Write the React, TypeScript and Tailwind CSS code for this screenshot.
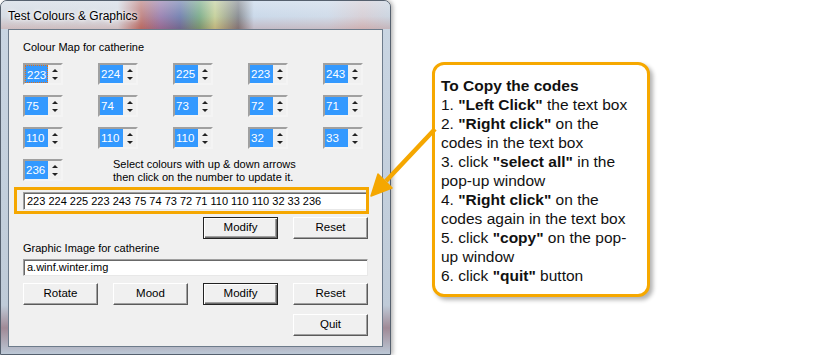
import React from "react";

const row1 = ["223", "224", "225", "223", "243"];
const row2 = ["75", "74", "73", "72", "71"];
const row3 = ["110", "110", "110", "32", "33"];

function Spinner({ value, focused }: { value: string; focused?: boolean }) {
  return (
    <div className="w-[40px] h-[22px] flex border-2 border-t-[#a0a0a0] border-l-[#a0a0a0] border-r-[#f4f4f4] border-b-[#f4f4f4] bg-[#f0f0f0]">
      <div
        className={
          "w-[23px] shrink-0 h-full bg-[#3399ff] text-white text-[11.5px] leading-[18px] pl-[1px] overflow-hidden whitespace-nowrap " +
          (focused ? "border border-dotted border-[#e0701a] leading-[16px] pl-0" : "")
        }
      >
        {value}
      </div>
      <div className="w-[13px] shrink-0 flex flex-col items-center justify-center gap-[5px]">
        <svg width="6" height="3" viewBox="0 0 6 3">
          <path d="M3 0 L6 3 L0 3 Z" fill="#222" />
        </svg>
        <svg width="6" height="3" viewBox="0 0 6 3">
          <path d="M0 0 L6 0 L3 3 Z" fill="#222" />
        </svg>
      </div>
    </div>
  );
}

function Btn({ label, def, className }: { label: string; def?: boolean; className?: string }) {
  return (
    <button
      className={
        "h-[22px] w-[75px] bg-[#f0f0f0] text-[11.5px] text-black leading-none " +
        (def
          ? "border border-[#222] shadow-[inset_1px_1px_0_#fff,inset_-1px_-1px_0_#696969,inset_-2px_-2px_0_#a0a0a0] "
          : "border border-white border-r-[#5a5a5a] border-b-[#5a5a5a] shadow-[inset_-1px_-1px_0_#a0a0a0] ") +
        (className ?? "")
      }
    >
      {label}
    </button>
  );
}

function TextBox({ value, h }: { value: string; h: string }) {
  return (
    <div
      className={
        "w-[345px] bg-white border border-[#a0a0a0] border-r-[#e8e8e8] border-b-[#e8e8e8] shadow-[inset_1px_1px_0_#696969] pl-[3px] text-[11px] text-black flex items-center " +
        h
      }
    >
      {value}
    </div>
  );
}

function Window() {
  return (
    <div className="w-[391px] h-[355px] shrink-0 flex flex-col rounded-t-[7px] border border-[#55606e] bg-[#c9d5e2] shadow-[2px_0_4px_rgba(0,0,0,0.3)]">
      <div className="relative h-[28px] rounded-t-[6px] bg-[linear-gradient(to_right,#d4dae2_0%,#d8dde4_30%,#b7615a_36%,#84609c_41%,#4f5f9c_46%,#5c9b6a_51%,#c0cc80_55%,#6a6d72_61%,#c4d6ea_65%,#ccdaea_84%,#d6c9cf_93%,#c6d1de_100%)]">
        <div className="absolute inset-0 rounded-t-[6px] bg-[linear-gradient(to_bottom,rgba(235,240,246,0.5),rgba(220,226,234,0.3)_55%,rgba(190,120,110,0.3))]" />
        <div className="relative pl-[7px] pt-[6px] text-[12px] text-black [text-shadow:0_0_6px_#fff,0_0_3px_#fff]">
          Test Colours &amp; Graphics
        </div>
      </div>
      <div className="flex-1 px-[7px] pb-[7px] bg-[linear-gradient(to_bottom,#c9d5e2,#bfcbd8_85%,#a08a96_92%,#bcc8d6)]">
        <div className="h-full border border-[#6d7b8b] bg-[#f0f0f0] pl-[14px] pt-[11px] flex flex-col text-[11px] text-black">
          <div className="leading-[13px]">Colour Map for catherine</div>
          <div className="mt-[9px] grid grid-cols-[repeat(5,40px)] gap-x-[35px] gap-y-[10px]">
            {row1.map((v, i) => (
              <Spinner key={"a" + i} value={v} focused={i === 0} />
            ))}
            {row2.map((v, i) => (
              <Spinner key={"b" + i} value={v} />
            ))}
            {row3.map((v, i) => (
              <Spinner key={"c" + i} value={v} />
            ))}
          </div>
          <div className="mt-[10px] h-[26px] flex items-start">
            <Spinner value="236" />
            <div className="ml-[50px] leading-[13px] mt-[-1px]">
              <div>Select colours with up &amp; down arrows</div>
              <div>then click on the number to update it.</div>
            </div>
          </div>
          <div className="relative mt-[7px]">
            <TextBox value="223 224 225 223 243 75 74 73 72 71 110 110 110 32 33 236" h="h-[18px]" />
            <div className="absolute left-[-9px] top-[-5px] w-[355px] h-[27px] border-[3px] border-[#f5a700]" />
          </div>
          <div className="mt-[7px] grid grid-cols-[repeat(4,75px)] gap-x-[15px]">
            <Btn label="Modify" def className="col-start-3" />
            <Btn label="Reset" />
          </div>
          <div className="mt-[3px] leading-[13px]">Graphic Image for catherine</div>
          <div className="mt-[4px]">
            <TextBox value="a.winf.winter.img" h="h-[17px]" />
          </div>
          <div className="mt-[7px] grid grid-cols-[repeat(4,75px)] gap-x-[15px]">
            <Btn label="Rotate" />
            <Btn label="Mood" />
            <Btn label="Modify" def />
            <Btn label="Reset" />
          </div>
          <div className="mt-[9px] grid grid-cols-[repeat(4,75px)] gap-x-[15px]">
            <Btn label="Quit" className="col-start-4" />
          </div>
        </div>
      </div>
    </div>
  );
}

function Callout() {
  return (
    <div className="w-[218px] h-[235px] rounded-[12px] border-[3px] border-[#f6a800] bg-white shadow-[3px_3px_4px_rgba(0,0,0,0.3)] pl-[6px] pt-[11px] text-[15.5px] leading-[19px] text-[#111]">
      <div className="font-bold">To Copy the codes</div>
      <div>
        1. <b>"Left Click"</b> the text box
      </div>
      <div>
        2. <b>"Right click"</b> on the
      </div>
      <div>codes in the text box</div>
      <div>
        3. click <b>"select all"</b> in the
      </div>
      <div>pop-up window</div>
      <div>
        4. <b>"Right click"</b> on the
      </div>
      <div>codes again in the text box</div>
      <div>
        5. click <b>"copy"</b> on the pop-
      </div>
      <div>up window</div>
      <div>
        6. click <b>"quit"</b> button
      </div>
    </div>
  );
}

export default function App() {
  return (
    <div className="relative w-[821px] h-[355px] bg-white flex overflow-hidden font-['Liberation_Sans',Arial,sans-serif]">
      <Window />
      <div className="pl-[41px] pt-[62px]">
        <Callout />
      </div>
      <svg
        className="absolute left-0 top-0 pointer-events-none"
        width="821"
        height="355"
        viewBox="0 0 821 355"
      >
        <line x1="435" y1="129" x2="386" y2="181" stroke="#f5a700" strokeWidth="4.5" />
        <path d="M371 196 L392 188 L378 174 Z" fill="#f5a700" stroke="#f5a700" strokeWidth="1.5" strokeLinejoin="round" />
      </svg>
    </div>
  );
}
